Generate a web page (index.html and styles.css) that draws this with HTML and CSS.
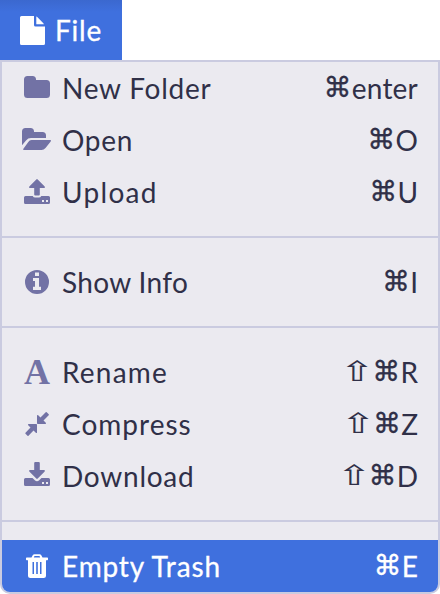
FILE: index.html
```html
<!DOCTYPE html>
<html lang="en">
<head>
<meta charset="utf-8">
<title>File menu</title>
<link rel="stylesheet" href="styles.css">
</head>
<body>
<div class="menu-bar">
  <div class="tab">
    <svg class="file-icon" viewBox="0 0 25 29"><path d="M1.500 0H14v9q0 1.500 1.500 1.500H25V27.500Q25 29 23.500 29H1.500Q0 29 0 27.500V1.500Q0 0 1.500 0zM16.300.5q.7.300 1.200.8l5.600 5.600q.5.500.8 1.300H16.300z"/></svg>
    <span class="w-file">File</span>
  </div>
</div>
<div class="menu">
  <div class="group">
    <div class="item">
      <svg class="icon" viewBox="0 0 30 30"><path d="M5.500 3h5Q14 3 14 6.500V7h10.500Q28 7 28 10.500v11Q28 25 24.500 25h-19Q2 25 2 21.500v-15Q2 3 5.500 3z"/></svg>
      <span class="label w-new">New Folder</span><span class="keys"><span class="cmd">⌘</span><span class="w-enter">enter</span></span>
    </div>
    <div class="item">
      <svg class="icon" viewBox="0 0 30 30"><path d="M3.500 3h5Q12 3 12 6.500V7h8.500Q24 7 24 10.500V13H9Q6 13 4 15.400L0 20.200V6.500Q0 3 3.500 3z"/><path d="M9.500 15H28q1.700 0 .7 1.400L23.500 23q-1.600 2-4 2H2q-1.500 0-.6-1.300L6.300 17Q7.600 15 9.500 15z"/></svg>
      <span class="label w-open">Open</span><span class="keys"><span class="cmd">⌘</span><span>O</span></span>
    </div>
    <div class="item">
      <svg class="icon" viewBox="0 0 30 30"><path d="M15.700 2.400l7 7q.9 1.600-.7 1.600h-4.200v6.500q0 1-1 1h-3.600q-1 0-1-1V11H8q-1.600 0-.7-1.600l7-7q.7-.7 1.400 0z"/><path fill-rule="evenodd" d="M3.500 19H10.700q.8 1.500 2.400 1.500h3.800q1.600 0 2.400-1.500h7.200Q28 19 28 20.500v5Q28 27 26.500 27h-23Q2 27 2 25.500v-5Q2 19 3.500 19zM20 23v2h2v-2zm4 0v2h2v-2z"/></svg>
      <span class="label w-upload">Upload</span><span class="keys"><span class="cmd">⌘</span><span>U</span></span>
    </div>
  </div>
  <div class="group">
    <div class="item">
      <svg class="icon" viewBox="0 0 30 30"><path fill-rule="evenodd" d="M15 3a12 12 0 1 0 0 24a12 12 0 0 0 0-24zM13 5.500h4V9h-4zM11 11h6v8.700h2V23h-8v-3.300h2V14h-2z"/></svg>
      <span class="label w-info">Show Info</span><span class="keys"><span class="cmd">⌘</span><span>I</span></span>
    </div>
  </div>
  <div class="group">
    <div class="item">
      <span class="icon letter">A</span>
      <span class="label w-rename">Rename</span><span class="keys"><span class="shift">⇧</span><span class="cmd">⌘</span><span>R</span></span>
    </div>
    <div class="item">
      <svg class="icon" viewBox="0 0 30 30"><path d="M15 14.200V6.500q.3-1 1.200-.3l2.300 2.300 5.200-5.200q.5-.5 1 0l2 2q.5.500 0 1l-5.200 5.200 2.300 2.300q.7.900-.3 1.200H15.800Q15 15 15 14.200z"/><path d="M14.200 15H6.500q-1 .3-.3 1.200l2.300 2.300-5 5.200q-.5.500 0 1l2 2q.5.500 1 0l5-5.200 2.300 2.300q.9.700 1.200-.3V15.800Q15 15 14.200 15z"/></svg>
      <span class="label w-compress">Compress</span><span class="keys"><span class="shift">⇧</span><span class="cmd">⌘</span><span>Z</span></span>
    </div>
    <div class="item">
      <svg class="icon" viewBox="0 0 30 30"><path d="M13.200 1h3.600q1 0 1 1v7H22q1.600 0 .7 1.600l-7 7q-.7.700-1.400 0l-7-7Q6.400 9 8 9h4.200V2q0-1 1-1z"/><path fill-rule="evenodd" d="M3.500 17H10.500l2.300 2.200q2.200 1.900 4.400 0L19.500 17h7Q28 17 28 18.500v5Q28 25 26.500 25h-23Q2 25 2 23.500v-5Q2 17 3.500 17zM20 21v2h2v-2zm4 0v2h2v-2z"/></svg>
      <span class="label w-download">Download</span><span class="keys"><span class="shift">⇧</span><span class="cmd">⌘</span><span>D</span></span>
    </div>
  </div>
  <div class="group">
    <div class="item selected">
      <svg class="icon" viewBox="0 0 30 30"><path fill-rule="evenodd" d="M9.500 6.500l1.200-2.200q.6-1 1.800-1h5q1.200 0 1.800 1l1.200 2.200h4.800q.7 0 .7.700v1.300q0 .8-.7.800H24V24.500Q24 27 21.500 27h-13Q6 27 6 24.500V9.300H4.700Q4 9.300 4 8.500V7.200q0-.7.700-.7zM11.800 6.500h6.400l-.7-1.400h-5zM10.500 11v12H12V11zm3.700 0v12h1.600V11zM18 11v12h1.500V11z"/></svg>
      <span class="label w-trash">Empty Trash</span><span class="keys"><span class="cmd">⌘</span><span>E</span></span>
    </div>
  </div>
</div>
</body>
</html>
```
FILE: styles.css
```css
* { box-sizing: border-box; }
body {
  margin: 0;
  background: #fff;
  color: #303048;
  font: 28px/52px Lato, "Liberation Sans", sans-serif;
}
svg { display: block; fill: currentColor; }
.menu-bar { display: flex; height: 60px; }
.tab {
  display: flex;
  align-items: center;
  gap: 10px;
  width: 122px;
  height: 60px;
  padding-left: 20px;
  color: #fff;
  background: linear-gradient(#3b68cf, #3f70de 12px);
  -webkit-text-stroke: 0.3px;
}
.file-icon { width: 25px; height: 29px; flex: none; }
.menu {
  height: 534px;
  border: 2px solid #cacbe0;
  border-radius: 0 0 10px 10px;
  background: #ebeaf0;
  overflow: hidden;
}
.group + .group {
  margin-top: 18px;
  padding-top: 18px;
  border-top: 2px solid #cacbe0;
}
.item {
  display: flex;
  align-items: center;
  height: 52px;
  padding: 0 20px;
  white-space: nowrap;
}
.icon { width: 30px; height: 30px; flex: none; color: #7272a5; }
.letter {
  font: bold 36px/30px "Liberation Serif", serif;
  text-align: center;
}
.label { margin-left: 10px; }
.w-file { letter-spacing: 0.8px; }
.w-new { letter-spacing: 0.75px; }
.w-enter { letter-spacing: 0.2px; }
.w-open { letter-spacing: 0.7px; }
.w-upload { letter-spacing: 1.3px; }
.w-info { letter-spacing: 0.35px; }
.w-rename { letter-spacing: 1.2px; }
.w-compress { letter-spacing: 1px; }
.w-download { letter-spacing: 0.75px; }
.w-trash { letter-spacing: 0.85px; }
.keys { display: flex; align-items: center; margin-left: auto; }
.cmd, .shift {
  display: flex;
  justify-content: center;
  font-family: "DejaVu Sans", sans-serif;
}
.cmd {
  width: 28px;
  -webkit-text-stroke: 0.35px;
}
.shift {
  width: 30px;
  transform: scale(1.5, 1);
}
.selected, .selected .icon { color: #fff; }
.selected { background: #3f70de; -webkit-text-stroke: 0.3px; }
```
